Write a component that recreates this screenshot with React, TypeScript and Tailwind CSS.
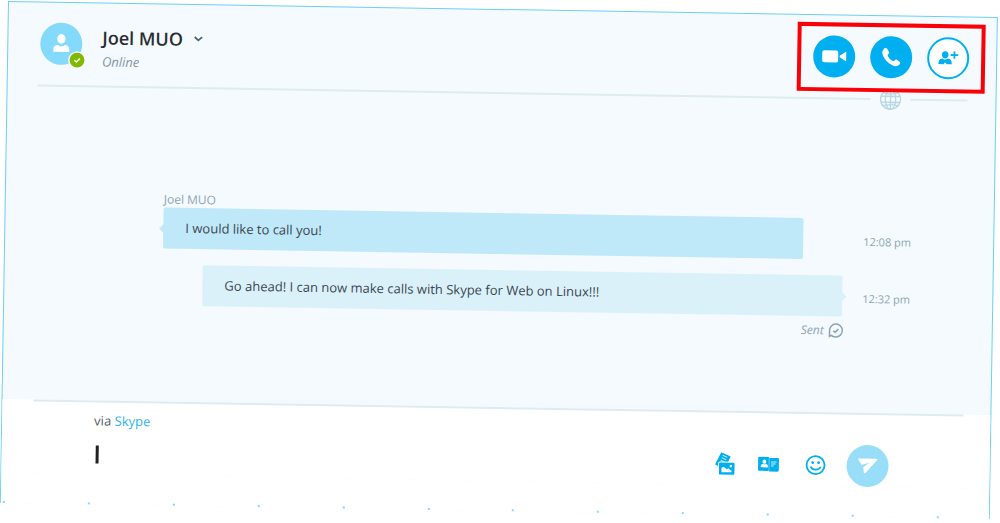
import { ReactNode } from "react";

interface Message {
  id: number;
  author?: string;
  text: string;
  time: string;
  mine: boolean;
}

const messages: Message[] = [
  { id: 1, author: "Joel MUO", text: "I would like to call you!", time: "12:08 pm", mine: false },
  {
    id: 2,
    text: "Go ahead! I can now make calls with Skype for Web on Linux!!!",
    time: "12:32 pm",
    mine: true,
  },
];

function CallButton({
  label,
  outlined = false,
  children,
}: {
  label: string;
  outlined?: boolean;
  children: ReactNode;
}) {
  return (
    <button
      type="button"
      aria-label={label}
      className={`flex size-[42px] items-center justify-center rounded-full ${
        outlined ? "border-2 border-[#00aff0] bg-white text-[#00aff0]" : "bg-[#00aff0] text-white"
      }`}
    >
      {children}
    </button>
  );
}

function Avatar() {
  return (
    <div className="relative size-[42px] shrink-0 rounded-full bg-[#84dafa]">
      <svg viewBox="0 0 42 42" className="size-full" fill="#fff">
        <ellipse cx="21" cy="16" rx="4.2" ry="4.8" />
        <path d="M13 29v-2.600c0-2.800 2-4.300 4.500-4.300 1 .9 2.200 1.300 3.500 1.300s2.500-.4 3.500-1.300c2.500 0 4.500 1.500 4.500 4.300V29z" />
      </svg>
      <svg viewBox="0 0 18 18" className="absolute -right-1 -bottom-1 size-[18px]">
        <circle cx="9" cy="9" r="9" fill="#f4fafd" />
        <circle cx="9" cy="9" r="7.400" fill="#7fba00" />
        <path d="M6.300 9.200l1.900 1.700 3.600-3.400" fill="none" stroke="#fff" strokeWidth="1.500" />
      </svg>
    </div>
  );
}

function GlobeIcon() {
  return (
    <svg viewBox="0 0 22 22" className="mx-[9px] size-[22px] shrink-0" fill="none" stroke="#b9d6e2" strokeWidth="1.300">
      <circle cx="11" cy="11" r="10" />
      <ellipse cx="11" cy="11" rx="5.200" ry="10" />
      <path d="M11 1v20M1.500 8h19M1.500 14h19M3.500 4.500q7.500 2.500 15 0M3.500 17.500q7.500-2.500 15 0" />
    </svg>
  );
}

function Header() {
  return (
    <header className="pr-7 pl-[30px]">
      <div className="flex h-[72px] items-start justify-between pt-5 pl-0.5">
        <div className="flex">
          <Avatar />
          <div className="pl-5">
            <div className="flex h-[28px] items-center gap-2">
              <h1 className="text-[18px] leading-6 font-semibold text-[#2b2d33]">Joel MUO</h1>
              <button type="button" aria-label="Conversation options" className="p-0.5">
                <svg viewBox="0 0 10 6" className="h-[6px] w-[10px]" fill="none" stroke="#4b6377" strokeWidth="1.800">
                  <path d="M1.300 1L5 4.300 8.700 1" />
                </svg>
              </button>
            </div>
            <p className="text-[13px] leading-5 text-[#8795a6] italic">Online</p>
          </div>
        </div>

        <div className="relative -mr-px flex gap-[15px]">
          <div className="pointer-events-none absolute -inset-x-4 -top-[13px] -bottom-[14px] z-10 border-4 border-[#fa0007]" />
          <CallButton label="Video call">
            <svg viewBox="0 0 26 16" className="h-4 w-[26px]" fill="currentColor">
              <rect x="1" y="2" width="16" height="12" rx="2" />
              <path d="M18.500 7.200L25 3v10l-6.500-4.200z" />
            </svg>
          </CallButton>
          <CallButton label="Audio call">
            <svg viewBox="0 0 22 22" className="size-[22px]" fill="currentColor">
              <path d="M3.600 2.600c1.300-1.200 2.700-.9 3.500.3l1.500 2.500c.5.900.2 1.800-.5 2.400-.8.700-.7 1.300-.2 2.300 1 1.900 2.500 3.300 4.300 4.200 1 .5 1.600.5 2.200-.3.600-.8 1.400-1.100 2.300-.6l2.500 1.500c1.200.8 1.300 2.100.2 3.200-1.900 1.900-4.400 2.200-7.200.8-4.200-2-7.600-5.400-9.500-9.600C1.500 6.800 1.900 4.300 3.600 2.600z" />
            </svg>
          </CallButton>
          <CallButton label="Add people" outlined>
            <svg viewBox="0 0 22 18" className="h-[18px] w-[22px]" fill="currentColor">
              <path d="M8 2c2.200 0 3.300 1.500 3.300 3.500S10 9.300 8 9.300 4.700 7.500 4.700 5.500 5.800 2 8 2z" />
              <path d="M5.300 9.200Q8 11.500 10.700 9.200c2.700.3 4 1.800 4 5.800H9.600L8 13l-1.600 2H1.300c0-4 1.300-5.500 4-5.800z" />
              <path d="M16.300 2h1.800v2.800H21v1.800h-2.900v2.800h-1.800V6.600h-2.900V4.800h2.900z" />
            </svg>
          </CallButton>
        </div>
      </div>

      <div className="flex items-center">
        <div className="h-[2px] flex-1 bg-[#deebf1]" />
        <GlobeIcon />
        <div className="h-[2px] w-[57px] bg-[#deebf1]" />
      </div>
    </header>
  );
}

function MessageRow({ message }: { message: Message }) {
  const { author, text, time, mine } = message;

  return (
    <li>
      {author && <p className="pl-[158px] text-[12px] leading-4 text-[#8fa5b3]">{author}</p>}
      <div className={`flex items-end ${mine ? "pl-[198px]" : "pl-[158px]"}`}>
        <div
          className={`relative min-h-[41px] flex-1 rounded-xs px-[22px] py-[10px] text-[13px] leading-5 text-[#3a4750] ${
            mine ? "mr-5 bg-[#dbf1fa]" : "mr-[60px] bg-[#bfe8f9]"
          }`}
        >
          {text}
          <span
            className={`absolute top-1/2 size-[6px] -translate-y-1/2 rotate-45 ${
              mine ? "-right-[3px] bg-[#dbf1fa]" : "-left-[3px] bg-[#bfe8f9]"
            }`}
          />
        </div>
        <time className="w-[130px] pb-[10px] text-[11px] leading-4 text-[#8fa5b3]">{time}</time>
      </div>
    </li>
  );
}

function Conversation() {
  return (
    <main className="pt-[93px] pb-[74px]">
      <ul className="flex flex-col gap-4">
        {messages.map((message) => (
          <MessageRow key={message.id} message={message} />
        ))}
      </ul>
      <div className="mt-[6px] flex items-center justify-end gap-1 pr-[148px] text-[12px] leading-4 text-[#8fa5b3] italic">
        Sent
        <svg viewBox="0 0 16 16" className="size-4" fill="none" stroke="#8ba4b1">
          <path d="M1.800 14V8.500A6.400 6.400 0 1 1 8 14.400c-2 0-3.500-.5-4.500-1.400L1.800 14z" strokeWidth="1.500" />
          <path d="M5.500 8.300l1.800 1.600 3.300-3.500" strokeWidth="1.500" />
        </svg>
      </div>
    </main>
  );
}

function Composer() {
  return (
    <footer className="bg-white pr-[27px] pl-[31px]">
      <div className="h-[2px] bg-[#deebf1]" />
      <div className="flex items-start pr-[74px] pl-[61px]">
        <div className="flex-1 pt-[10px]">
          <p className="text-[13px] leading-4 text-[#555e66]">
            via{" "}
            <a href="#skype" className="text-[#2fb5f0]">
              Skype
            </a>
          </p>
          <label className="mt-4 flex items-center pl-0.5">
            <span className="h-[18px] w-[3px] bg-[#222]" />
            <input
              type="text"
              aria-label="Type a message"
              className="h-5 w-full min-w-0 bg-transparent text-[13px] outline-none"
            />
          </label>
        </div>

        <div className="flex items-center pt-[30px] text-[#00aff0]">
          <button type="button" aria-label="Send files">
            <svg viewBox="0 0 22 26" className="h-[26px] w-[22px]">
              <path d="M7.500 1.500l9.500 4.200-3.200 7H5.500V16L1.500 14z" fill="currentColor" />
              <path d="M8 7l4.500 2M9 4.600l4.500 2M7 9.500l4 1.800" stroke="#bfe9fb" strokeWidth="1" />
              <rect x="5" y="11.500" width="16.500" height="13" rx="1.500" fill="currentColor" stroke="#fff" />
              <path d="M8 21.500v-4.300l2.300-1.200 3 2.600 1.500-1 3.200 2.400v1.500z" fill="#fff" />
              <circle cx="17.300" cy="15.300" r="1.300" fill="#fff" />
            </svg>
          </button>
          <button type="button" aria-label="Send contacts" className="ml-[22px]">
            <svg viewBox="0 0 22 16" className="h-4 w-[22px]">
              <rect x="0.500" y="0.500" width="11" height="14" rx="1.200" fill="currentColor" />
              <path d="M11.500 1.500H20a1.300 1.300 0 0 1 1.300 1.300v11A1.300 1.300 0 0 1 20 15.100h-8.500z" fill="currentColor" />
              <path d="M11.500 2v12.500" stroke="#5fcaf5" />
              <ellipse cx="6.800" cy="5.300" rx="1.900" ry="2.200" fill="#fff" />
              <path d="M3.200 11V9.500c0-1.200 1.200-1.900 2.300-1.900q1.300.8 2.600 0c1.100 0 2.200.7 2.200 1.900V11z" fill="#fff" />
              <path d="M13.500 5.500h5.500M13.500 7.500H18M13.500 9.500H16" stroke="#d5f1fc" />
            </svg>
          </button>
          <button type="button" aria-label="Emoticons" className="ml-[25px]">
            <svg viewBox="0 0 22 22" className="size-[22px]" fill="none" stroke="currentColor">
              <circle cx="11" cy="11" r="9" strokeWidth="1.800" />
              <path d="M6 12.500c1.500 4 8.500 4 10 0" strokeWidth="1.700" />
              <circle cx="8" cy="8.500" r="1.400" fill="currentColor" stroke="none" />
              <circle cx="14" cy="8.500" r="1.400" fill="currentColor" stroke="none" />
            </svg>
          </button>
          <button
            type="button"
            aria-label="Send message"
            className="ml-5 flex size-[42px] items-center justify-center rounded-full bg-[#99def9] text-white"
          >
            <svg viewBox="0 0 22 18" className="h-[18px] w-[22px]" fill="currentColor">
              <path d="M1.500 2.500Q1.300 1.500 2.500 1.500H20q1.500 0 .5 1.300L9 16q-1.300 1.200-1.700-.5L6.800 10l6.500-4.200-8.300 2z" />
            </svg>
          </button>
        </div>
      </div>
    </footer>
  );
}

export default function App() {
  return (
    <div className="min-h-screen overflow-hidden bg-white pt-px pr-[2px] pl-2 font-['Open_Sans','Noto_Sans',sans-serif]">
      <div className="origin-top-left rotate-[0.93deg]">
        <div className="border-x border-t border-[#6fcff6] bg-[#f4fafd]">
          <Header />
          <Conversation />
          <Composer />
          {/* frayed lower edge of the card */}
          <div className="flex h-[30px] items-end justify-between bg-white pr-[50px] pl-[2px]">
            {Array.from({ length: 12 }, (_, i) => (
              <span key={i} className="size-[2px] bg-[#84dafa]" />
            ))}
          </div>
        </div>
      </div>
    </div>
  );
}
